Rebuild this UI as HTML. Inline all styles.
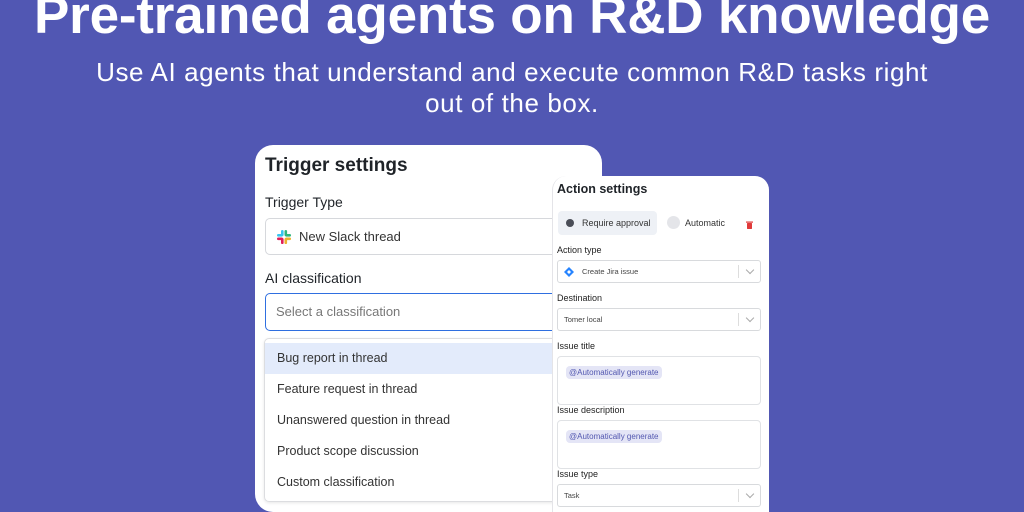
<!DOCTYPE html>
<html><head><meta charset="utf-8"><style>
*{box-sizing:border-box;margin:0;padding:0}
html,body{width:1024px;height:512px;overflow:hidden}
body{background:#5157b3;font-family:"Liberation Sans",sans-serif;position:relative;color:#1f2328}
h1{position:absolute;top:-15px;left:0;width:1024px;text-align:center;color:#fff;font-size:53px;font-weight:bold;letter-spacing:-0.2px;white-space:nowrap}
.sub{position:absolute;top:57px;left:87px;width:850px;text-align:center;color:#fff;font-size:26px;line-height:31px;letter-spacing:0.6px}
.card1{position:absolute;left:255px;top:145px;width:347px;height:367px;background:#fff;border-radius:18px}
.card1 h2{position:absolute;left:10px;top:10px;font-size:19px;font-weight:bold}
.lbl{position:absolute;left:10px;font-size:14px}
.box{position:absolute;left:10px;width:340px;border:1px solid #d6d8dc;border-radius:5px;font-size:13px;color:#333}
.dd{position:absolute;left:9px;top:193px;width:340px;height:164px;border:1px solid #dcdde0;border-radius:5px;box-shadow:0 1px 3px rgba(0,0,0,.1);overflow:hidden}
.dd div{height:31px;line-height:31px;padding-left:12px;font-size:12.5px;color:#333}
.card2{position:absolute;left:552px;top:176px;width:217px;height:350px;background:#fff;border-radius:14px 14px 0 0;border-left:1px solid #e4e4e8}
.card2 .t{position:absolute;left:4px;top:6px;font-size:12.5px;font-weight:bold}
.sl{position:absolute;left:4px;font-size:9px;color:#222}
.sb{position:absolute;left:4px;width:204px;height:23px;border:1px solid #d8dadd;border-radius:3px;font-size:7.5px;color:#444;line-height:21px;padding-left:6px}
.sb .ch{position:absolute;right:0;top:4px;width:22px;height:13px;border-left:1px solid #ddd}
.sb .ch:after{content:"";position:absolute;left:8px;top:2px;width:5px;height:5px;border-right:1px solid #aaa;border-bottom:1px solid #aaa;transform:rotate(45deg)}
.ta{position:absolute;left:4px;width:204px;height:49px;border:1px solid #e0e2e5;border-radius:4px}
.chip{position:absolute;left:8px;top:9px;background:#e4e5f6;color:#5257b0;font-size:8px;padding:2px 3px;border-radius:4px}
</style></head><body>
<h1>Pre-trained agents on R&amp;D knowledge</h1>
<div class="sub">Use AI agents that understand and execute common R&amp;D tasks right out of the box.</div>
<div class="card1">
 <h2>Trigger settings</h2>
 <div class="lbl" style="top:49px">Trigger Type</div>
 <div class="box" style="top:73px;height:37px;line-height:35px;padding-left:33px">
  <svg style="position:absolute;left:10px;top:10px" width="16" height="16" viewBox="0 0 16 16"><rect x="5" y="1" width="2.6" height="6" rx="1.3" fill="#36c5f0"/><rect x="1" y="5" width="6" height="2.6" rx="1.3" fill="#36c5f0"/><rect x="8.5" y="1" width="2.6" height="6" rx="1.3" fill="#2eb67d"/><rect x="9" y="5" width="6" height="2.6" rx="1.3" fill="#2eb67d"/><rect x="8.5" y="9" width="2.6" height="6" rx="1.3" fill="#ecb22e"/><rect x="9" y="8.5" width="6" height="2.6" rx="1.3" fill="#ecb22e"/><rect x="5" y="9" width="2.6" height="6" rx="1.3" fill="#e01e5a"/><rect x="1" y="8.5" width="6" height="2.6" rx="1.3" fill="#e01e5a"/></svg>
  New Slack thread</div>
 <div class="lbl" style="top:125px">AI classification</div>
 <div class="box" style="top:148px;height:38px;line-height:36px;padding-left:10px;border:1.5px solid #2f6fe0;color:#777">Select a classification</div>
 <div class="dd">
  <div style="background:#e3ebfb;margin-top:4px">Bug report in thread</div>
  <div>Feature request in thread</div>
  <div>Unanswered question in thread</div>
  <div>Product scope discussion</div>
  <div>Custom classification</div>
 </div>
</div>
<div class="card2">
 <div class="t">Action settings</div>
 <div style="position:absolute;left:5px;top:35px;width:99px;height:24px;background:#eef1f6;border-radius:4px"></div>
 <div style="position:absolute;left:13px;top:43px;width:8px;height:8px;border-radius:50%;background:#4a4d57"></div>
 <div style="position:absolute;left:29px;top:42px;font-size:9px;color:#333">Require approval</div>
 <div style="position:absolute;left:114px;top:40px;width:13px;height:13px;border-radius:50%;background:#e4e5e9"></div>
 <div style="position:absolute;left:132px;top:42px;font-size:9px;color:#333">Automatic</div>
 <svg style="position:absolute;left:193px;top:45px" width="7" height="8" viewBox="0 0 7 8"><rect x="0" y="0.5" width="7" height="1.2" fill="#e03a3a"/><rect x="1" y="2" width="5" height="6" rx="0.6" fill="#e03a3a"/></svg>
 <div class="sl" style="top:69px">Action type</div>
 <div class="sb" style="top:84px;padding-left:24px"><svg style="position:absolute;left:6px;top:6px" width="10" height="10" viewBox="0 0 10 10"><path d="M5 0L10 5L5 10L0 5Z" fill="#2684ff"/><path d="M5 3L7 5L5 7L3 5Z" fill="#fff"/></svg>Create Jira issue<span class="ch"></span></div>
 <div class="sl" style="top:117px">Destination</div>
 <div class="sb" style="top:132px">Tomer local<span class="ch"></span></div>
 <div class="sl" style="top:165px">Issue title</div>
 <div class="ta" style="top:180px"><span class="chip">@Automatically generate</span></div>
 <div class="sl" style="top:229px">Issue description</div>
 <div class="ta" style="top:244px"><span class="chip">@Automatically generate</span></div>
 <div class="sl" style="top:293px">Issue type</div>
 <div class="sb" style="top:308px">Task<span class="ch"></span></div>
</div>
</body></html>
